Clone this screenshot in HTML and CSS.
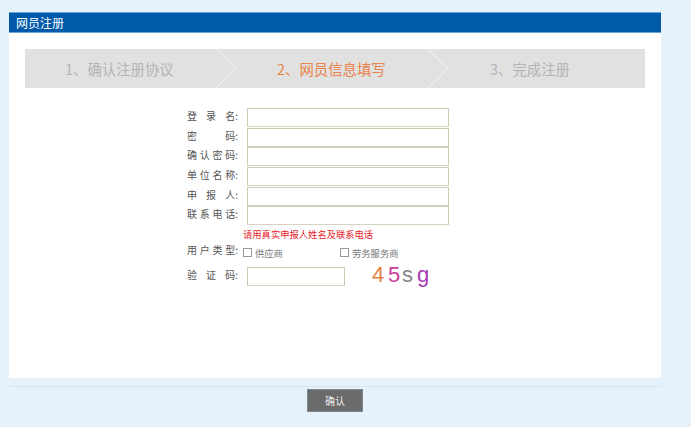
FILE: index.html
```html
<!DOCTYPE html>
<html lang="zh-CN">
<head>
<meta charset="utf-8">
<title>网员注册</title>
<link rel="stylesheet" href="styles.css">
</head>
<body>
<main class="panel">
  <h1 class="panel-title">网员注册</h1>
  <div class="panel-body">
    <ol class="steps">
      <li class="step step-one">1、确认注册协议
        <svg class="chevron" viewBox="0 0 20 39" width="20" height="39"><path d="M0 0 L20 19.5 L0 39" fill="none" stroke="#f4f4f4" stroke-width="1"/></svg>
      </li>
      <li class="step step-two active">2、网员信息填写
        <svg class="chevron" viewBox="0 0 20 39" width="20" height="39"><path d="M0 0 L20 19.5 L0 39" fill="none" stroke="#f4f4f4" stroke-width="1"/></svg>
      </li>
      <li class="step step-three">3、完成注册</li>
    </ol>
    <form class="form">
      <div class="row"><label class="label"><span>登</span><span>录</span><span>名:</span></label><input class="field" type="text"></div>
      <div class="row"><label class="label"><span>密</span><span>码:</span></label><input class="field" type="text"></div>
      <div class="row"><label class="label"><span>确</span><span>认</span><span>密</span><span>码:</span></label><input class="field" type="text"></div>
      <div class="row"><label class="label"><span>单</span><span>位</span><span>名</span><span>称:</span></label><input class="field" type="text"></div>
      <div class="row"><label class="label"><span>申</span><span>报</span><span>人:</span></label><input class="field" type="text"></div>
      <div class="row"><label class="label"><span>联</span><span>系</span><span>电</span><span>话:</span></label><input class="field" type="text"></div>
      <p class="hint">请用真实申报人姓名及联系电话</p>
      <div class="row row-type">
        <span class="label"><span>用</span><span>户</span><span>类</span><span>型:</span></span>
        <span class="option option-first"><i class="box"></i>供应商</span>
        <span class="option"><i class="box"></i>劳务服务商</span>
      </div>
      <div class="row row-code">
        <label class="label"><span>验</span><span>证</span><span>码:</span></label>
        <input class="field field-code" type="text">
        <div class="captcha"><span class="c1">4</span><span class="c2">5</span><span class="c3">s</span><span class="c4">g</span></div>
      </div>
    </form>
  </div>
</main>
<footer class="actions">
  <button class="confirm" type="button">确认</button>
</footer>
</body>
</html>
```
FILE: styles.css
```css
* { box-sizing: border-box; }
html, body { margin: 0; height: 100%; }
body {
  background: #e5f2fb;
  padding-top: 12px;
  font-family: "Noto Sans CJK SC", "Liberation Sans", sans-serif;
  overflow: hidden;
}
.panel { margin-left: 9px; width: 652px; }
.panel-title {
  margin: 0;
  height: 21px;
  padding-left: 7px;
  background: #005aa9;
  border-top: 1px solid #6ba6d6;
  border-bottom: 1px solid #6ba6d6;
  color: #fff;
  font-size: 12px;
  font-weight: 400;
  line-height: 19px;
}
.panel-body {
  height: 345px;
  background: #fff;
  padding: 16px 16px 0;
}
.steps {
  display: flex;
  list-style: none;
  margin: 0;
  padding: 0;
  height: 39px;
  background: #e1e1e1;
  font-size: 14.4px;
  line-height: 39px;
  color: #b4b4b4;
}
.step { position: relative; }
.step-one { width: 211px; padding-left: 40px; }
.step-two { width: 212px; padding-left: 41px; }
.step-three { flex: 1; padding-left: 42px; }
.step.active { color: #e8834a; }
.chevron { position: absolute; right: 0; top: 0; display: block; }
.form { padding: 20px 0 0 162px; font-size: 10px; color: #555; }
.row { display: flex; align-items: center; height: 19.6px; }
.label {
  display: flex;
  justify-content: space-between;
  flex: none;
  width: 51px;
  padding-bottom: 3px;
  line-height: 14px;
  color: #555;
  margin-right: 9px;
}
.field {
  display: block;
  flex: none;
  width: 202px;
  height: 19px;
  padding: 0;
  background: #fff;
  border: 1px solid #cfcbb4;
  border-bottom-color: #d6d3c2;
  outline: none;
}
.hint {
  margin: 1px 0 0 56px;
  height: 14px;
  line-height: 14px;
  font-size: 9.3px;
  color: #e8202a;
}
.row-type { margin-top: 3px; height: 16px; }
.row-type .label { margin-right: 5px; }
.option {
  display: flex;
  align-items: center;
  color: #777;
  font-size: 9.3px;
  line-height: 14px;
  padding-top: 2px;
}
.option-first { width: 97px; }
.box {
  width: 9px;
  height: 9px;
  margin-right: 3px;
  border: 1px solid #999;
  background: #fff;
}
.row-code { margin-top: 7px; height: 19px; }
.field-code { width: 98px; }
.captcha {
  display: flex;
  margin: -3px 0 0 27px;
  font-family: "Liberation Sans", sans-serif;
  font-size: 22px;
  line-height: 24px;
}
.captcha span { display: block; }
.c1 { color: #e8813f; width: 16px; }
.c2 { color: #c93c9d; width: 14px; }
.c3 { color: #888; width: 15px; }
.c4 { color: #a63cb8; }
.actions {
  margin: 8px 0 0;
  width: 661px;
  padding: 3px 0 0 307px;
  background: linear-gradient(#d9e4ea, #d9e4ea) 9px 0 / 652px 1px no-repeat;
}
.confirm {
  display: block;
  width: 56px;
  height: 23px;
  padding: 0;
  background: #6b6b6b;
  border: 1px solid #7f8a90;
  color: #eee;
  font-family: inherit;
  font-size: 10px;
}
```
